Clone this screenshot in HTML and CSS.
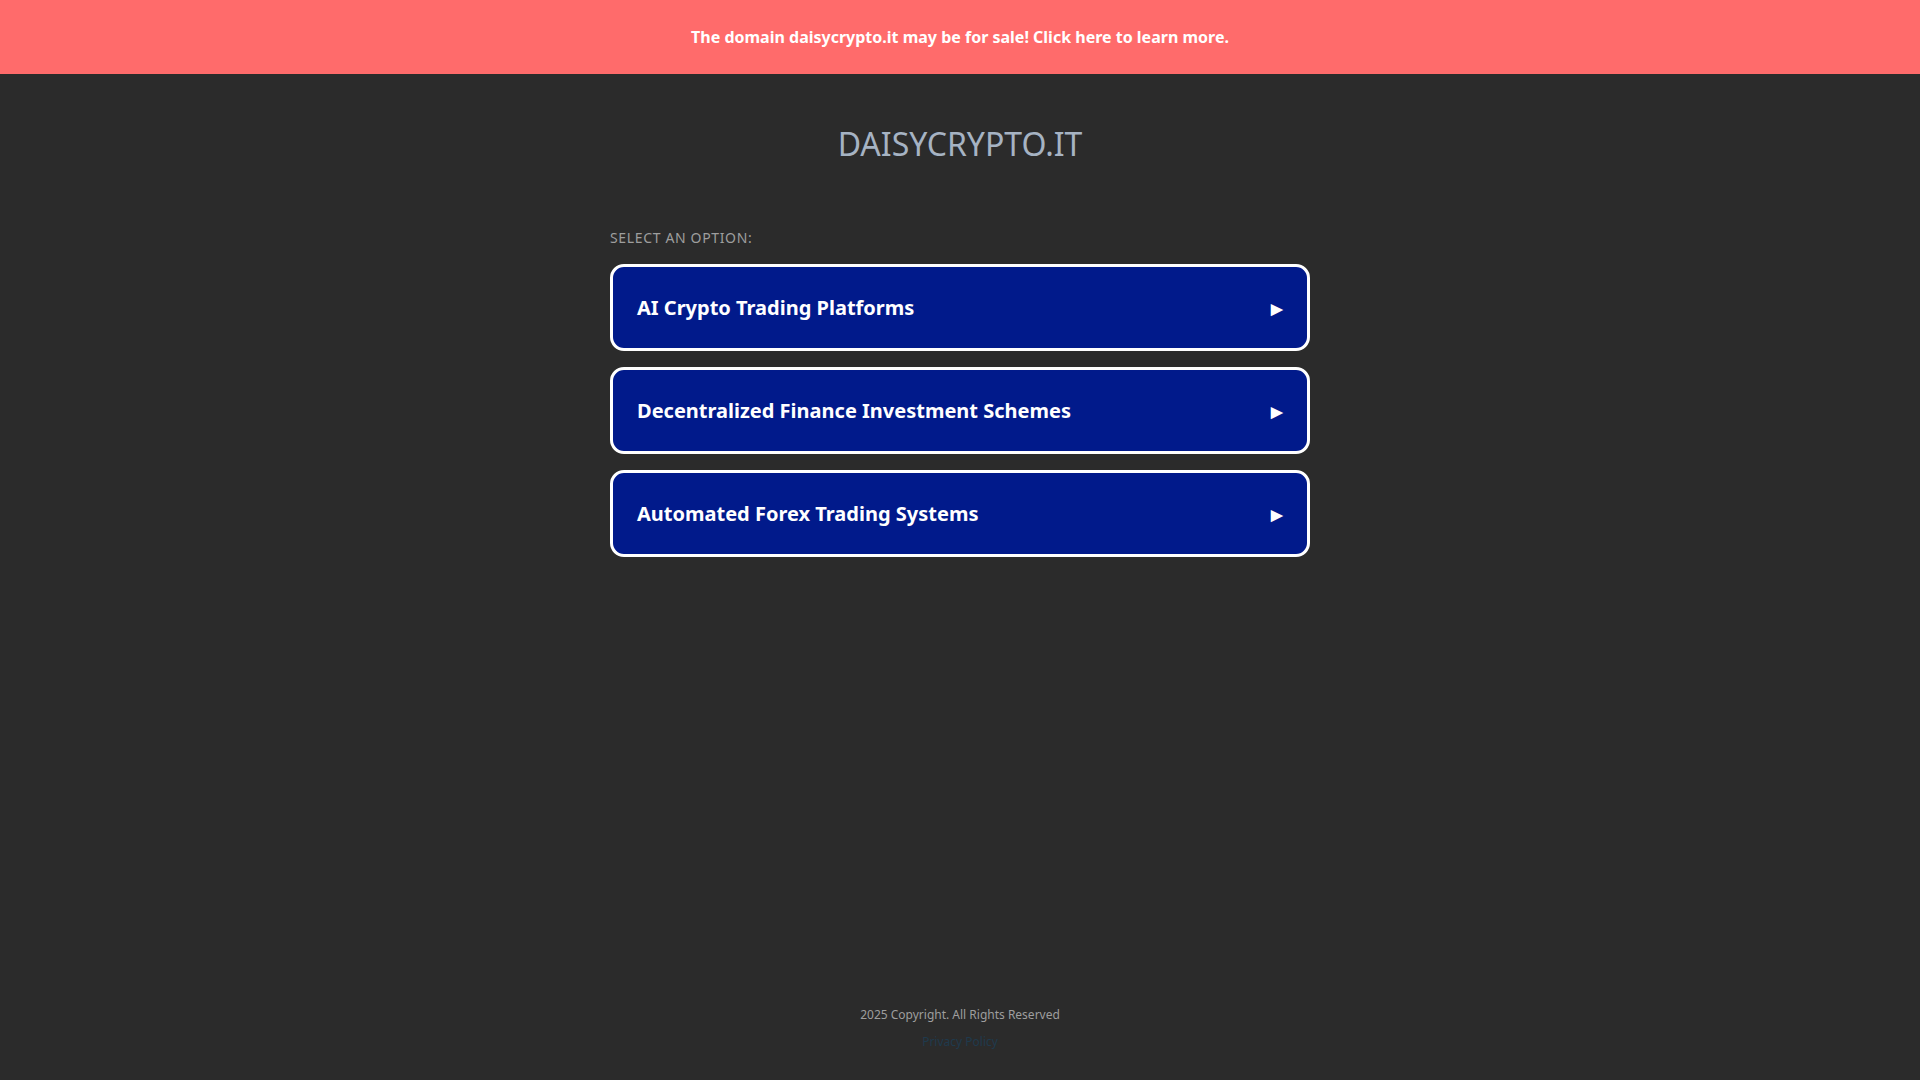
FILE: index.html
```html
<!DOCTYPE html>
<html lang="en">
<head>
    <meta charset="UTF-8">
    <meta name="viewport" content="width=device-width, initial-scale=1.0">
    <title>daisycrypto.it</title>
    <link rel="stylesheet" href="styles.css">
</head>
<body>
    <!-- Sale banner -->
    <a class="sale-banner" href="#">The domain daisycrypto.it may be for sale! Click here to learn more.</a>

    <div class="container">
        <h1 class="domain-title">DAISYCRYPTO.IT</h1>

        <div class="options">
            <p class="options-label">Select an option:</p>
            <a class="option-button" href="#">
                <span>AI Crypto Trading Platforms</span>
                <span class="arrow">&#9654;</span>
            </a>
            <a class="option-button" href="#">
                <span>Decentralized Finance Investment Schemes</span>
                <span class="arrow">&#9654;</span>
            </a>
            <a class="option-button" href="#">
                <span>Automated Forex Trading Systems</span>
                <span class="arrow">&#9654;</span>
            </a>
        </div>
    </div>

    <footer class="footer">
        <p class="copyright">2025 Copyright. All Rights Reserved</p>
        <a class="privacy-link" href="#">Privacy Policy</a>
    </footer>
</body>
</html>
```

FILE: styles.css
```css
:root {
    --banner-color: #ff6b6b;
    --page-bg: #2b2b2b;
    --button-bg: #011a8b;
    --title-color: #a6b3c3;
    --muted-color: #9e9e9e;
}

* {
    box-sizing: border-box;
    margin: 0;
    padding: 0;
}

body {
    font-family: "Noto Sans", "Open Sans", Arial, sans-serif;
    background: var(--page-bg);
    color: #fff;
    min-height: 100vh;
    display: flex;
    flex-direction: column;
}

a {
    text-decoration: none;
}

.sale-banner {
    display: flex;
    align-items: center;
    justify-content: center;
    height: 74px;
    background: var(--banner-color);
    color: #fff;
    font-size: 16px;
    font-weight: 700;
}

.container {
    width: 700px;
    margin: 0 auto;
}

.domain-title {
    margin-top: 48px;
    font-size: 32px;
    line-height: 44px;
    font-weight: 400;
    color: var(--title-color);
    text-align: center;
}

.options {
    margin-top: 62px;
}

.options-label {
    font-size: 14px;
    line-height: 20px;
    color: var(--muted-color);
    text-transform: uppercase;
    letter-spacing: 0.65px;
    margin-bottom: 16px;
}

.option-button {
    display: flex;
    justify-content: space-between;
    align-items: center;
    height: 87px;
    padding: 0 24px;
    margin-bottom: 16px;
    background: var(--button-bg);
    border: 3px solid #fff;
    border-radius: 14px;
    color: #fff;
    font-size: 20px;
    font-weight: 700;
}

.option-button .arrow {
    font-size: 15px;
}

.footer {
    margin-top: auto;
    padding-bottom: 28px;
    text-align: center;
}

.copyright {
    font-size: 12px;
    line-height: 20px;
    color: var(--muted-color);
    margin-bottom: 4px;
}

.privacy-link {
    font-size: 12px;
    line-height: 20px;
    color: #1f3a4d;
}
```
